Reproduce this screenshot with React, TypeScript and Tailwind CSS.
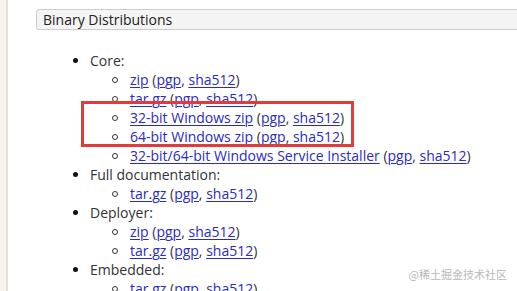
import React from "react";

const font = { fontFamily: '"Open Sans", "Noto Sans", sans-serif' };

function L({ children }: { children: React.ReactNode }) {
  return <span className="text-[#2a2ac4] underline decoration-1 underline-offset-[2px]">{children}</span>;
}

function Sigs() {
  return (
    <>
      {" "}(<L>pgp</L>, <L>sha512</L>)
    </>
  );
}

function Outer({ label }: { label: string }) {
  return (
    <div className="flex h-[19px] items-center">
      <div className="flex w-[54px] justify-end pr-[12px]">
        <span className="block h-[5px] w-[5px] rounded-full bg-[#111]" />
      </div>
      <span className="text-[#333]">{label}</span>
    </div>
  );
}

function Inner({ link }: { link: string }) {
  return (
    <div className="flex h-[19px] items-center">
      <div className="flex w-[94px] justify-end pr-[12px]">
        <span className="block h-[6px] w-[6px] rounded-full border-[1.5px] border-[#333]" />
      </div>
      <span className="whitespace-nowrap text-[#333]">
        <L>{link}</L>
        <Sigs />
      </span>
    </div>
  );
}

export default function App() {
  return (
    <div className="flex h-[291px] w-[517px] overflow-hidden bg-white text-[14px]" style={font}>
      <div className="w-[8px] shrink-0 border-r-2 border-[#e6e2da] bg-[#f8f4eb]" />
      <div className="relative flex-1 pl-[28px] pt-[9px]">
        <div className="-mr-[4px] flex h-[21px] items-center rounded-l-[3px] border border-[#cccccc] bg-[#f4f4f4] pl-[6px] text-[14px] text-[#222]">
          Binary Distributions
        </div>
        <div className="mt-[21px] flex flex-col">
          <Outer label="Core:" />
          <Inner link="zip" />
          <Inner link="tar.gz" />
          <div className="relative">
            <Inner link="32-bit Windows zip" />
            <Inner link="64-bit Windows zip" />
            <div className="pointer-events-none absolute left-[45px] top-[-7px] h-[46px] w-[273px] border-[3px] border-[#e23b3b]" />
          </div>
          <Inner link="32-bit/64-bit Windows Service Installer" />
          <Outer label="Full documentation:" />
          <Inner link="tar.gz" />
          <Outer label="Deployer:" />
          <Inner link="zip" />
          <Inner link="tar.gz" />
          <Outer label="Embedded:" />
          <Inner link="tar.gz" />
        </div>
        <div
          className="absolute bottom-[9px] right-[10px] text-[11px] text-[#b8b8b8]"
          style={{ fontFamily: '"Noto Sans CJK SC", sans-serif' }}
        >
          @稀土掘金技术社区
        </div>
      </div>
    </div>
  );
}
